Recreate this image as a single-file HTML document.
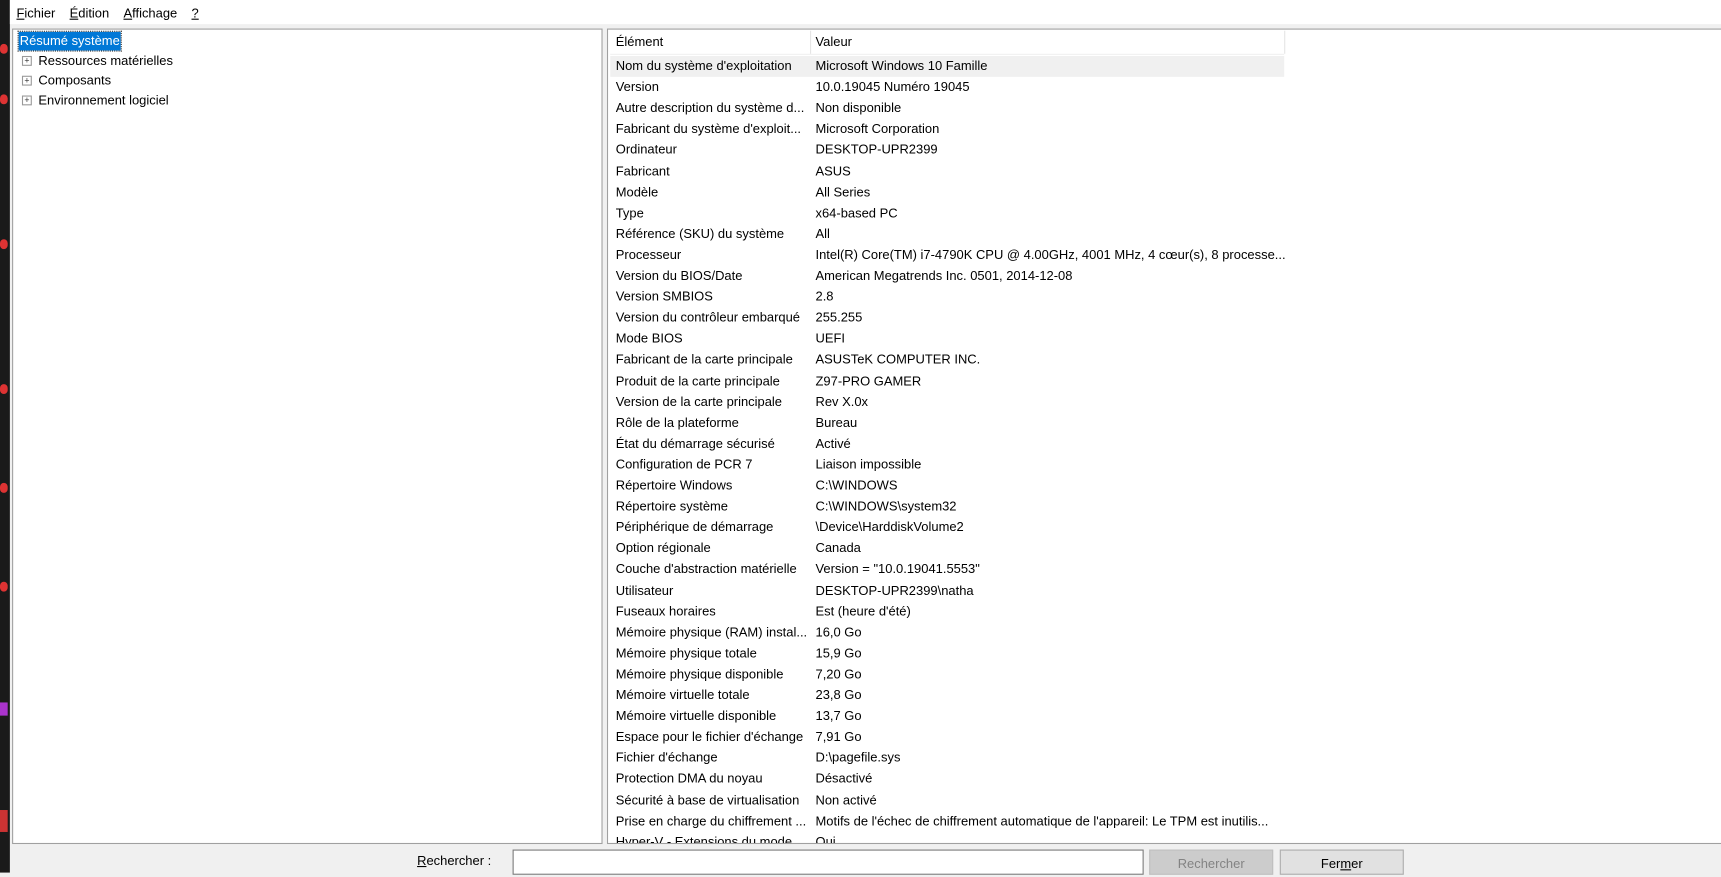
<!DOCTYPE html>
<html><head><meta charset="utf-8"><style>
html,body{margin:0;padding:0;width:1721px;height:873px;overflow:hidden;background:#f0f0f0}
#s{position:absolute;left:0;top:0;width:1568px;height:795px;transform:scale(1.09758);transform-origin:0 0;font-family:"Liberation Sans",sans-serif;font-size:11.8px;color:#000}
.a{position:absolute}
.menu span{margin-right:13px}
.row{position:absolute;left:2px;width:614px;height:19px;line-height:19px}
.row .k{position:absolute;left:5px;width:176px;white-space:nowrap;overflow:hidden}
.row .v{position:absolute;left:187px;white-space:nowrap}
.tree div{position:absolute;left:8px;height:17px;line-height:17px;white-space:nowrap}
.pl{display:inline-block;width:7px;height:7px;border:1px solid #999;font-size:8px;line-height:7px;text-align:center;color:#333;margin-right:6px;vertical-align:1px;background:#fff}
.btn{position:absolute;height:21px;line-height:24px;text-align:center;border:1px solid #adadad;background:#e1e1e1}
</style></head><body><div id="s">
<div class="a" style="left:0;top:0;width:9px;height:795px;background:#1a1a1a"></div>
<div class="a" style="left:0;top:40px;width:7px;height:9px;border-radius:5px;background:#d33"></div>
<div class="a" style="left:0;top:86px;width:7px;height:9px;border-radius:5px;background:#d33"></div>
<div class="a" style="left:0;top:218px;width:7px;height:9px;border-radius:5px;background:#d33"></div>
<div class="a" style="left:0;top:350px;width:7px;height:9px;border-radius:5px;background:#d33"></div>
<div class="a" style="left:0;top:440px;width:7px;height:9px;border-radius:5px;background:#d33"></div>
<div class="a" style="left:0;top:530px;width:7px;height:9px;border-radius:5px;background:#d33"></div>
<div class="a" style="left:0;top:640px;width:7px;height:12px;background:#a3c"></div>
<div class="a" style="left:0;top:738px;width:7px;height:20px;background:#c33"></div>
<div class="a" style="left:9px;top:0;width:1559px;height:22px;background:#fff"></div>
<div class="a menu" style="left:15px;top:5px;line-height:14px"><span><u>F</u>ichier</span><span><u>É</u>dition</span><span><u>A</u>ffichage</span><span><u>?</u></span></div>
<div class="a tree" style="left:11px;top:26px;width:536px;height:741px;background:#fff;border:1px solid #a0a0a0">
<div style="top:2px;left:5px;background:#0078d7;color:#fff;padding:0 1px;outline:1px dotted #333">Résumé système</div>
<div style="top:20px"><span class="pl">+</span>Ressources matérielles</div>
<div style="top:38px"><span class="pl">+</span>Composants</div>
<div style="top:56px"><span class="pl">+</span>Environnement logiciel</div>
</div>
<div class="a" style="left:553px;top:26px;width:1014px;height:741px;background:#fff;border:1px solid #a0a0a0;overflow:hidden">
<div class="a" style="left:2px;top:1px;width:614px;height:21px;line-height:21px;border-bottom:1px solid #f0f0f0"><span class="a" style="left:5px">Élément</span><span class="a" style="left:182px;top:0;height:21px;border-left:1px solid #e5e5e5"></span><span class="a" style="left:187px">Valeur</span><span class="a" style="left:614px;top:0;height:21px;border-left:1px solid #e5e5e5"></span></div>
<div class="a" style="left:0;top:24px" id="r"></div>
</div>
<div class="a" style="left:380px;top:777px"><u>R</u>echercher :</div>
<div class="a" style="left:467px;top:774px;width:573px;height:21px;background:#fff;border:1px solid #7a7a7a"></div>
<div class="btn" style="left:1047px;top:774px;width:111px;color:#838383;background:#ccc;border-color:#bfbfbf">Rechercher</div>
<div class="btn" style="left:1166px;top:774px;width:111px">Fer<u>m</u>er</div>
</div>
<script>
var d=[["Nom du système d'exploitation","Microsoft Windows 10 Famille"],["Version","10.0.19045 Numéro 19045"],["Autre description du système d...","Non disponible"],["Fabricant du système d'exploit...","Microsoft Corporation"],["Ordinateur","DESKTOP-UPR2399"],["Fabricant","ASUS"],["Modèle","All Series"],["Type","x64-based PC"],["Référence (SKU) du système","All"],["Processeur","Intel(R) Core(TM) i7-4790K CPU @ 4.00GHz, 4001 MHz, 4 cœur(s), 8 processe..."],["Version du BIOS/Date","American Megatrends Inc. 0501, 2014-12-08"],["Version SMBIOS","2.8"],["Version du contrôleur embarqué","255.255"],["Mode BIOS","UEFI"],["Fabricant de la carte principale","ASUSTeK COMPUTER INC."],["Produit de la carte principale","Z97-PRO GAMER"],["Version de la carte principale","Rev X.0x"],["Rôle de la plateforme","Bureau"],["État du démarrage sécurisé","Activé"],["Configuration de PCR 7","Liaison impossible"],["Répertoire Windows","C:\\WINDOWS"],["Répertoire système","C:\\WINDOWS\\system32"],["Périphérique de démarrage","\\Device\\HarddiskVolume2"],["Option régionale","Canada"],["Couche d'abstraction matérielle","Version = \"10.0.19041.5553\""],["Utilisateur","DESKTOP-UPR2399\\natha"],["Fuseaux horaires","Est (heure d'été)"],["Mémoire physique (RAM) instal...","16,0 Go"],["Mémoire physique totale","15,9 Go"],["Mémoire physique disponible","7,20 Go"],["Mémoire virtuelle totale","23,8 Go"],["Mémoire virtuelle disponible","13,7 Go"],["Espace pour le fichier d'échange","7,91 Go"],["Fichier d'échange","D:\\pagefile.sys"],["Protection DMA du noyau","Désactivé"],["Sécurité à base de virtualisation","Non activé"],["Prise en charge du chiffrement ...","Motifs de l'échec de chiffrement automatique de l'appareil: Le TPM est inutilis..."],["Hyper-V - Extensions du mode ...","Oui"]];
var h="";d.forEach(function(x,i){h+='<div class="row" style="top:'+(i*19.1).toFixed(1)+'px;'+(i==0?'background:#f0f0f0':'')+'"><span class="k"></span><span class="v"></span></div>';});
var r=document.getElementById("r");r.innerHTML=h;var rs=r.children;
d.forEach(function(x,i){rs[i].children[0].textContent=x[0];rs[i].children[1].textContent=x[1];});
</script>
</body></html>
